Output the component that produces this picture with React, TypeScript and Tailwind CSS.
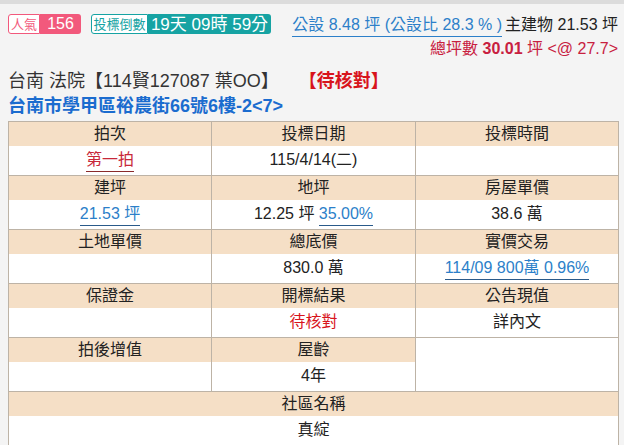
import React from "react";

const F = { fontFamily: '"Liberation Sans", "Noto Sans CJK TC", Arial, sans-serif' };

function H({ children, colSpan }: { children?: React.ReactNode; colSpan?: number }) {
  return (
    <td colSpan={colSpan} className="h-[24px] bg-[#f5dfc6] border-x border-[#bdb3a6] text-center text-[16px] text-[#222] leading-none p-0 align-middle">
      {children}
    </td>
  );
}
function D({ children, colSpan, rowSpan }: { children?: React.ReactNode; colSpan?: number; rowSpan?: number }) {
  return (
    <td colSpan={colSpan} rowSpan={rowSpan} className="h-[30px] bg-white border-x border-b border-[#bdb3a6] text-center text-[16px] text-[#222] leading-none p-0 align-middle">
      {children}
    </td>
  );
}
const Link = ({ children, red }: { children: React.ReactNode; red?: boolean }) => (
  <span className={red ? "text-[#c8283a] border-b border-[#8a2a2a] pb-[3px]" : "text-[#2c7fc9] border-b border-[#2a5a8a] pb-[3px]"}>{children}</span>
);

export default function App() {
  return (
    <div style={F} className="min-h-[445px] w-[624px] bg-[#f4f4f4] border-t-[4px] border-[#dcdcdc] overflow-hidden">
      <div className="pl-2 pr-[6px]">
        <div className="flex justify-between h-[58px]">
          <div className="flex items-start pt-[10px] gap-[10px]">
            <div className="flex h-[20px]">
              <span className="w-[32px] bg-white border border-[#f2597c] rounded-l-[3px] text-[#f2597c] text-[13px] flex items-center justify-center leading-none">人氣</span>
              <span className="w-[41px] bg-[#f2597c] rounded-r-[3px] text-white text-[16px] flex items-center justify-center leading-none">156</span>
            </div>
            <div className="flex h-[20px]">
              <span className="w-[57px] bg-white border border-[#16a3a3] rounded-l-[3px] text-[#16a3a3] text-[13px] flex items-center justify-center leading-none">投標倒數</span>
              <span className="w-[123px] bg-[#16a3a3] rounded-r-[3px] text-white text-[17px] flex items-center justify-center leading-none">19天 09時 59分</span>
            </div>
          </div>
          <div className="flex flex-col items-end pt-[13px] text-[16px] leading-none">
            <div className="h-[24px] flex items-start">
              <span className="text-[#2c7fc9] border-b border-[#2c7fc9] pb-[3px]">公設 8.48 坪 (公設比 28.3 % )</span>
              <span className="text-[#222] ml-[3px]">主建物 21.53 坪</span>
            </div>
            <div className="text-[#c8203f]">
              總坪數 <b>30.01</b> 坪 &lt;@&nbsp;27.7&gt;
            </div>
          </div>
        </div>
        <div className="flex items-center text-[18px] leading-none h-[37px]">
          <span className="text-[#333]">台南 法院【114賢127087 葉OO】</span>
          <span className="ml-[20px] text-[#d8141c] font-bold text-[18px]">【待核對】</span>
        </div>
        <div className="text-[18px] font-bold text-[#1b6ccf] leading-none h-[14px] flex items-center">
          台南市學甲區裕農街66號6樓-2&lt;7&gt;
        </div>
        <table className="mt-[8px] w-[610px] border-collapse table-fixed border-t border-[#bdb3a6]">
          <colgroup>
            <col className="w-[203px]" />
            <col className="w-[204px]" />
            <col className="w-[203px]" />
          </colgroup>
          <tbody>
            <tr><H>拍次</H><H>投標日期</H><H>投標時間</H></tr>
            <tr><D><Link red>第一拍</Link></D><D>115/4/14(二)</D><D></D></tr>
            <tr><H>建坪</H><H>地坪</H><H>房屋單價</H></tr>
            <tr><D><Link>21.53 坪</Link></D><D>12.25 坪 <Link>35.00%</Link></D><D>38.6 萬</D></tr>
            <tr><H>土地單價</H><H>總底價</H><H>實價交易</H></tr>
            <tr><D></D><D>830.0 萬</D><D><Link>114/09 800萬 0.96%</Link></D></tr>
            <tr><H>保證金</H><H>開標結果</H><H>公告現值</H></tr>
            <tr><D></D><D><span className="text-[#d8141c]">待核對</span></D><D>詳內文</D></tr>
            <tr><H>拍後增值</H><H>屋齡</H><D rowSpan={2}></D></tr>
            <tr><D></D><D>4年</D></tr>
            <tr><H colSpan={3}>社區名稱</H></tr>
            <tr><D colSpan={3}>真綻</D></tr>
          </tbody>
        </table>
      </div>
    </div>
  );
}
